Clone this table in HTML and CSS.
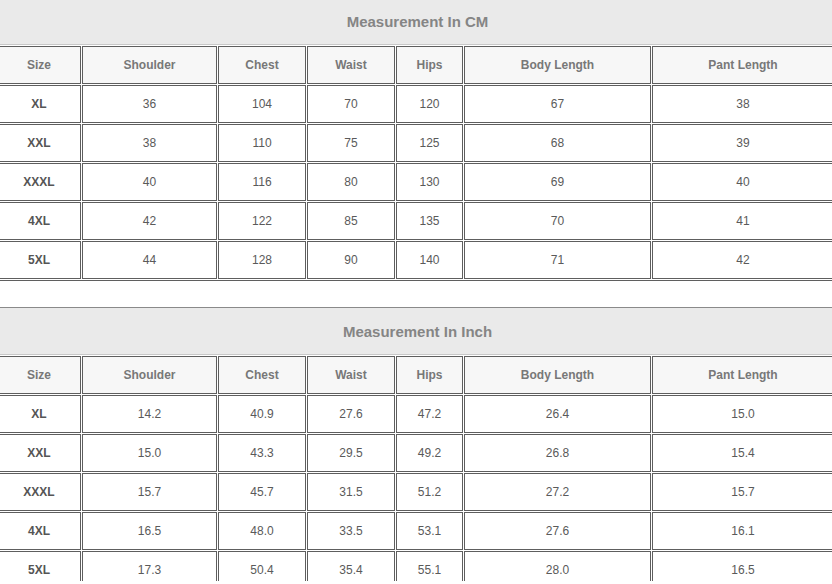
FILE: index.html
```html
<!DOCTYPE html>
<html>
<head>
<meta charset="utf-8">
<link rel="stylesheet" href="styles.css">
</head>
<body>
<div class="page">
  <section class="chart">
    <div class="title">Measurement In CM</div>
    <table class="grid">
      <colgroup>
        <col class="c-size"><col class="c-shoulder"><col class="c-chest"><col class="c-waist"><col class="c-hips"><col class="c-body"><col class="c-pant">
      </colgroup>
      <thead>
        <tr><th>Size</th><th>Shoulder</th><th>Chest</th><th>Waist</th><th>Hips</th><th>Body Length</th><th>Pant Length</th></tr>
      </thead>
      <tbody>
        <tr><td class="sz">XL</td><td>36</td><td>104</td><td>70</td><td>120</td><td>67</td><td>38</td></tr>
        <tr><td class="sz">XXL</td><td>38</td><td>110</td><td>75</td><td>125</td><td>68</td><td>39</td></tr>
        <tr><td class="sz">XXXL</td><td>40</td><td>116</td><td>80</td><td>130</td><td>69</td><td>40</td></tr>
        <tr><td class="sz">4XL</td><td>42</td><td>122</td><td>85</td><td>135</td><td>70</td><td>41</td></tr>
        <tr><td class="sz">5XL</td><td>44</td><td>128</td><td>90</td><td>140</td><td>71</td><td>42</td></tr>
      </tbody>
    </table>
  </section>
  <section class="chart second">
    <div class="title">Measurement In Inch</div>
    <table class="grid">
      <colgroup>
        <col class="c-size"><col class="c-shoulder"><col class="c-chest"><col class="c-waist"><col class="c-hips"><col class="c-body"><col class="c-pant">
      </colgroup>
      <thead>
        <tr><th>Size</th><th>Shoulder</th><th>Chest</th><th>Waist</th><th>Hips</th><th>Body Length</th><th>Pant Length</th></tr>
      </thead>
      <tbody>
        <tr><td class="sz">XL</td><td>14.2</td><td>40.9</td><td>27.6</td><td>47.2</td><td>26.4</td><td>15.0</td></tr>
        <tr><td class="sz">XXL</td><td>15.0</td><td>43.3</td><td>29.5</td><td>49.2</td><td>26.8</td><td>15.4</td></tr>
        <tr><td class="sz">XXXL</td><td>15.7</td><td>45.7</td><td>31.5</td><td>51.2</td><td>27.2</td><td>15.7</td></tr>
        <tr><td class="sz">4XL</td><td>16.5</td><td>48.0</td><td>33.5</td><td>53.1</td><td>27.6</td><td>16.1</td></tr>
        <tr><td class="sz">5XL</td><td>17.3</td><td>50.4</td><td>35.4</td><td>55.1</td><td>28.0</td><td>16.5</td></tr>
      </tbody>
    </table>
  </section>
</div>
</body>
</html>
```
FILE: styles.css
```css
html, body {
  margin: 0;
  padding: 0;
  background: #ffffff;
  overflow: hidden;
}
body {
  font-family: "Liberation Sans", Arial, sans-serif;
}
.page {
  width: 832px;
  height: 584px;
  overflow: hidden;
  margin-top: -3px;
}
.chart {
  margin-left: -4px;
  width: 839px;
  border-top: 1px solid #8a8a8a;
}
.second {
  margin-top: 26px;
}
.title {
  height: 46px;
  background: #eaeaea;
  border-bottom: 1px solid #c8c8c8;
  display: flex;
  align-items: center;
  justify-content: center;
  font-size: 15px;
  font-weight: bold;
  color: #858585;
  padding-left: 4px;
}
.grid {
  width: 839px;
  table-layout: fixed;
  border-collapse: separate;
  border-spacing: 1px;
  border-bottom: 1px solid #5f5f5f;
}
.c-size { width: 84px; }
.c-shoulder { width: 135px; }
.c-chest { width: 88px; }
.c-waist { width: 88px; }
.c-hips { width: 67px; }
.c-body { width: 187px; }
.c-pant { width: 182px; }
.grid th, .grid td {
  box-sizing: border-box;
  height: 38px;
  padding: 0;
  border: 1px solid #5e5e5e;
  text-align: center;
  vertical-align: middle;
  font-size: 12px;
}
.grid th {
  background: #f7f7f7;
  color: #787878;
  font-weight: bold;
}
.grid td {
  background: #ffffff;
  color: #5a5a5a;
}
.grid td.sz {
  font-weight: bold;
  color: #555555;
}
```
